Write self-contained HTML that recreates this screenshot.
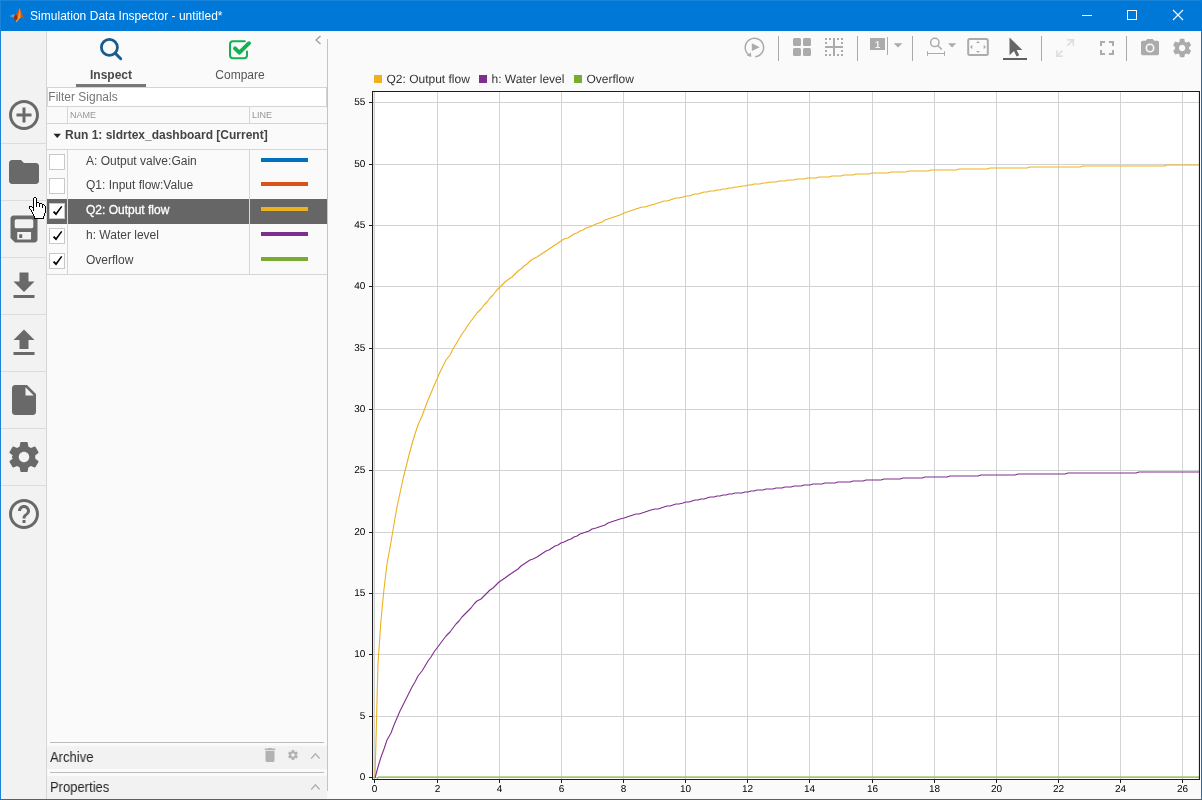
<!DOCTYPE html>
<html lang="en">
<head>
<meta charset="utf-8">
<title>Simulation Data Inspector - untitled*</title>
<style>
*{box-sizing:border-box;margin:0;padding:0}
html,body{width:1202px;height:800px;overflow:hidden}
body{position:relative;background:#fafafa;font-family:"Liberation Sans",Arial,sans-serif;font-size:12px;color:#444}
.abs{position:absolute}
div.abs,svg.abs{will-change:transform}
/* window frame */
#frame-l{left:0;top:0;width:1px;height:800px;background:#1a84da}
#frame-t{left:0;top:0;width:1202px;height:1px;background:#1a84da}
#frame-r{left:1201px;top:0;width:1px;height:800px;background:#0078d7}
#frame-b{left:0;top:799px;width:1202px;height:1px;background:#0078d7}
#titlebar{left:0;top:0;width:1202px;height:31px;background:#0078d7;color:#fff}
#title{left:30px;top:9px;font-size:12px;line-height:15px;white-space:nowrap;letter-spacing:0.03px;color:#fff}
/* sidebar */
#sidebar{left:1px;top:31px;width:46px;height:768px;background:#f2f2f2;border-right:1px solid #d6d6d6}
.sep{left:0;width:45px;height:1px;background:#dcdcdc}
.sico{left:5px;width:36px;height:36px;fill:#696969}
/* panel */
#panel{left:47px;top:31px;width:281px;height:768px;background:#fafafa}
#split{left:327px;top:39px;width:1px;height:752px;background:#c4c4c4}
.tab{font-size:12px;line-height:14px;white-space:nowrap;text-align:center}
#filter{left:47px;top:87px;width:280px;height:20px;background:#fff;border:1px solid #d4d4d4;color:#777;font-size:12px;line-height:18px;padding-left:0.3px}
.hl{background:#d6d6d6}
.hdr{font-size:9px;line-height:10px;color:#969696;white-space:nowrap}
.row{left:86px;font-size:12px;line-height:14px;color:#444;white-space:nowrap}
.cb{left:49px;width:16px;height:16px;background:#fff;border:1px solid #c8c8c8}
.sw{left:261px;width:47px;height:4px}
.bar{left:47px;width:280px;background:#f2f2f2}
.bart{left:50px;font-size:14px;line-height:16px;color:#262626;white-space:nowrap;transform:scaleX(0.929);transform-origin:0 0}
/* toolbar */
.tsep{top:36px;width:1px;height:25px;background:#a9a9a9}
svg{display:block;overflow:visible}
</style>
</head>
<body>
<!-- ================= chart ================= -->
<svg class="abs" id="chart" style="left:0;top:0;text-rendering:geometricPrecision" width="1202" height="800" viewBox="0 0 1202 800">
  <rect x="373" y="92" width="826" height="687" fill="#ffffff"/>
  <g stroke="#d2d3d5" stroke-width="1" shape-rendering="crispEdges">
<line x1="374.5" y1="92" x2="374.5" y2="779"/>
<line x1="437.5" y1="92" x2="437.5" y2="779"/>
<line x1="499.5" y1="92" x2="499.5" y2="779"/>
<line x1="561.5" y1="92" x2="561.5" y2="779"/>
<line x1="623.5" y1="92" x2="623.5" y2="779"/>
<line x1="685.5" y1="92" x2="685.5" y2="779"/>
<line x1="747.5" y1="92" x2="747.5" y2="779"/>
<line x1="809.5" y1="92" x2="809.5" y2="779"/>
<line x1="872.5" y1="92" x2="872.5" y2="779"/>
<line x1="934.5" y1="92" x2="934.5" y2="779"/>
<line x1="996.5" y1="92" x2="996.5" y2="779"/>
<line x1="1058.5" y1="92" x2="1058.5" y2="779"/>
<line x1="1120.5" y1="92" x2="1120.5" y2="779"/>
<line x1="1182.5" y1="92" x2="1182.5" y2="779"/>
<line x1="373" y1="777.5" x2="1199" y2="777.5"/>
<line x1="373" y1="716.5" x2="1199" y2="716.5"/>
<line x1="373" y1="654.5" x2="1199" y2="654.5"/>
<line x1="373" y1="593.5" x2="1199" y2="593.5"/>
<line x1="373" y1="532.5" x2="1199" y2="532.5"/>
<line x1="373" y1="470.5" x2="1199" y2="470.5"/>
<line x1="373" y1="409.5" x2="1199" y2="409.5"/>
<line x1="373" y1="348.5" x2="1199" y2="348.5"/>
<line x1="373" y1="286.5" x2="1199" y2="286.5"/>
<line x1="373" y1="225.5" x2="1199" y2="225.5"/>
<line x1="373" y1="164.5" x2="1199" y2="164.5"/>
<line x1="373" y1="102.5" x2="1199" y2="102.5"/>
  </g>
  <path d="M375,778 L378,663 L381,620 L384,589 L387,564 L391,542 L394,524 L397,507 L400,493 L403,479 L406,467 L409,455 L412,444 L415,434 L418,425 L422,416 L425,408 L428,400 L431,393 L434,386 L437,379 L440,372 L443,366 L446,360 L450,355 L453,349 L456,344 L459,339 L462,334 L465,330 L468,325 L471,321 L474,317 L477,313 L481,309 L484,305 L487,302 L490,298 L493,295 L496,291 L499,288 L502,285 L505,282 L509,279 L512,277 L515,274 L518,271 L521,269 L524,266 L527,264 L530,261 L533,259 L537,257 L540,255 L543,253 L546,251 L549,249 L552,247 L555,245 L558,243 L561,241 L564,239 L568,238 L571,236 L574,234 L577,233 L580,231 L583,230 L586,228 L589,227 L592,226 L596,224 L599,223 L602,222 L605,220 L608,219 L611,218 L614,217 L617,216 L620,215 L624,213 L627,212 L630,211 L633,210 L636,209 L639,208 L642,207 L645,207 L648,206 L651,205 L655,204 L658,203 L661,202 L664,201 L667,201 L670,200 L673,199 L676,198 L679,198 L683,197 L686,196 L689,196 L692,195 L695,194 L698,194 L701,193 L704,192 L707,192 L710,191 L714,191 L717,190 L720,190 L723,189 L726,189 L729,188 L732,188 L735,187 L738,187 L742,186 L745,186 L748,185 L751,185 L754,184 L757,184 L760,184 L763,183 L766,183 L770,182 L773,182 L776,182 L779,181 L782,181 L785,181 L788,180 L791,180 L794,180 L797,179 L801,179 L804,179 L807,178 L810,178 L813,178 L816,178 L819,177 L822,177 L825,177 L829,177 L832,176 L835,176 L838,176 L841,176 L844,175 L847,175 L850,175 L853,175 L856,174 L860,174 L863,174 L866,174 L869,174 L872,173 L875,173 L878,173 L881,173 L884,173 L888,173 L891,172 L894,172 L897,172 L900,172 L903,172 L906,172 L909,171 L912,171 L916,171 L919,171 L922,171 L925,171 L928,171 L931,170 L934,170 L937,170 L940,170 L943,170 L947,170 L950,170 L953,170 L956,170 L959,169 L962,169 L965,169 L968,169 L971,169 L975,169 L978,169 L981,169 L984,169 L987,169 L990,168 L993,168 L996,168 L999,168 L1002,168 L1006,168 L1009,168 L1012,168 L1015,168 L1018,168 L1021,168 L1024,168 L1027,168 L1030,167 L1034,167 L1037,167 L1040,167 L1043,167 L1046,167 L1049,167 L1052,167 L1055,167 L1058,167 L1062,167 L1065,167 L1068,167 L1071,167 L1074,167 L1077,167 L1080,167 L1083,166 L1086,166 L1089,166 L1093,166 L1096,166 L1099,166 L1102,166 L1105,166 L1108,166 L1111,166 L1114,166 L1117,166 L1121,166 L1124,166 L1127,166 L1130,166 L1133,166 L1136,166 L1139,166 L1142,166 L1145,166 L1148,166 L1152,166 L1155,166 L1158,166 L1161,166 L1164,166 L1167,165 L1170,165 L1173,165 L1176,165 L1180,165 L1183,165 L1186,165 L1189,165 L1192,165 L1195,165 L1198,165 L1199,165" fill="none" stroke="#edb120" stroke-width="1.100" stroke-linejoin="round"/>
  <path d="M375,778 L378,767 L381,757 L384,749 L387,740 L391,733 L394,725 L397,718 L400,711 L403,705 L406,699 L409,693 L412,687 L415,682 L418,676 L422,671 L425,666 L428,661 L431,657 L434,652 L437,648 L440,644 L443,640 L446,636 L450,632 L453,628 L456,624 L459,621 L462,617 L465,614 L468,611 L471,608 L474,604 L477,601 L481,599 L484,596 L487,593 L490,590 L493,588 L496,585 L499,582 L502,580 L505,578 L509,575 L512,573 L515,571 L518,569 L521,566 L524,564 L527,562 L530,560 L533,559 L537,557 L540,555 L543,553 L546,551 L549,550 L552,548 L555,546 L558,545 L561,543 L564,542 L568,540 L571,539 L574,537 L577,536 L580,534 L583,533 L586,532 L589,531 L592,529 L596,528 L599,527 L602,526 L605,525 L608,523 L611,522 L614,521 L617,520 L620,519 L624,518 L627,517 L630,516 L633,515 L636,514 L639,514 L642,513 L645,512 L648,511 L651,510 L655,509 L658,509 L661,508 L664,507 L667,506 L670,506 L673,505 L676,504 L679,504 L683,503 L686,502 L689,502 L692,501 L695,500 L698,500 L701,499 L704,499 L707,498 L710,497 L714,497 L717,496 L720,496 L723,495 L726,495 L729,494 L732,494 L735,493 L738,493 L742,493 L745,492 L748,492 L751,491 L754,491 L757,490 L760,490 L763,490 L766,489 L770,489 L773,489 L776,488 L779,488 L782,488 L785,487 L788,487 L791,487 L794,486 L797,486 L801,486 L804,485 L807,485 L810,485 L813,484 L816,484 L819,484 L822,484 L825,483 L829,483 L832,483 L835,483 L838,482 L841,482 L844,482 L847,482 L850,482 L853,481 L856,481 L860,481 L863,481 L866,480 L869,480 L872,480 L875,480 L878,480 L881,480 L884,479 L888,479 L891,479 L894,479 L897,479 L900,479 L903,478 L906,478 L909,478 L912,478 L916,478 L919,478 L922,478 L925,477 L928,477 L931,477 L934,477 L937,477 L940,477 L943,477 L947,477 L950,476 L953,476 L956,476 L959,476 L962,476 L965,476 L968,476 L971,476 L975,476 L978,476 L981,475 L984,475 L987,475 L990,475 L993,475 L996,475 L999,475 L1002,475 L1006,475 L1009,475 L1012,475 L1015,475 L1018,474 L1021,474 L1024,474 L1027,474 L1030,474 L1034,474 L1037,474 L1040,474 L1043,474 L1046,474 L1049,474 L1052,474 L1055,474 L1058,474 L1062,474 L1065,474 L1068,473 L1071,473 L1074,473 L1077,473 L1080,473 L1083,473 L1086,473 L1089,473 L1093,473 L1096,473 L1099,473 L1102,473 L1105,473 L1108,473 L1111,473 L1114,473 L1117,473 L1121,473 L1124,473 L1127,473 L1130,473 L1133,473 L1136,473 L1139,472 L1142,472 L1145,472 L1148,472 L1152,472 L1155,472 L1158,472 L1161,472 L1164,472 L1167,472 L1170,472 L1173,472 L1176,472 L1180,472 L1183,472 L1186,472 L1189,472 L1192,472 L1195,472 L1198,472 L1199,472" fill="none" stroke="#7e2f8e" stroke-width="1.100" stroke-linejoin="round"/>
  <path d="M377,779 L378,777 L1199,777" fill="none" stroke="#77ac30" stroke-width="1"/>
  <g stroke="#1e1e1e" stroke-width="1" shape-rendering="crispEdges">
<line x1="374.5" y1="779" x2="374.5" y2="783"/>
<line x1="437.5" y1="779" x2="437.5" y2="783"/>
<line x1="499.5" y1="779" x2="499.5" y2="783"/>
<line x1="561.5" y1="779" x2="561.5" y2="783"/>
<line x1="623.5" y1="779" x2="623.5" y2="783"/>
<line x1="685.5" y1="779" x2="685.5" y2="783"/>
<line x1="747.5" y1="779" x2="747.5" y2="783"/>
<line x1="809.5" y1="779" x2="809.5" y2="783"/>
<line x1="872.5" y1="779" x2="872.5" y2="783"/>
<line x1="934.5" y1="779" x2="934.5" y2="783"/>
<line x1="996.5" y1="779" x2="996.5" y2="783"/>
<line x1="1058.5" y1="779" x2="1058.5" y2="783"/>
<line x1="1120.5" y1="779" x2="1120.5" y2="783"/>
<line x1="1182.5" y1="779" x2="1182.5" y2="783"/>
<line x1="369" y1="777.5" x2="372" y2="777.5"/>
<line x1="369" y1="716.5" x2="372" y2="716.5"/>
<line x1="369" y1="654.5" x2="372" y2="654.5"/>
<line x1="369" y1="593.5" x2="372" y2="593.5"/>
<line x1="369" y1="532.5" x2="372" y2="532.5"/>
<line x1="369" y1="470.5" x2="372" y2="470.5"/>
<line x1="369" y1="409.5" x2="372" y2="409.5"/>
<line x1="369" y1="348.5" x2="372" y2="348.5"/>
<line x1="369" y1="286.5" x2="372" y2="286.5"/>
<line x1="369" y1="225.5" x2="372" y2="225.5"/>
<line x1="369" y1="164.5" x2="372" y2="164.5"/>
<line x1="369" y1="102.5" x2="372" y2="102.5"/>
  </g>
  <path d="M372.55,779.45 V91.55 H1199.45 V779.45 Z" fill="none" stroke="#1e1e1e" stroke-width="1.1"/>
  <g font-family="Liberation Sans, Arial, sans-serif" font-size="10" fill="#000">
<text x="374.5" y="792" text-anchor="middle">0</text>
<text x="437.5" y="792" text-anchor="middle">2</text>
<text x="499.5" y="792" text-anchor="middle">4</text>
<text x="561.5" y="792" text-anchor="middle">6</text>
<text x="623.5" y="792" text-anchor="middle">8</text>
<text x="685.5" y="792" text-anchor="middle">10</text>
<text x="747.5" y="792" text-anchor="middle">12</text>
<text x="809.5" y="792" text-anchor="middle">14</text>
<text x="872.5" y="792" text-anchor="middle">16</text>
<text x="934.5" y="792" text-anchor="middle">18</text>
<text x="996.5" y="792" text-anchor="middle">20</text>
<text x="1058.5" y="792" text-anchor="middle">22</text>
<text x="1120.5" y="792" text-anchor="middle">24</text>
<text x="1182.5" y="792" text-anchor="middle">26</text>
<text x="365.3" y="780.0" text-anchor="end">0</text>
<text x="365.3" y="719.0" text-anchor="end">5</text>
<text x="365.3" y="657.0" text-anchor="end">10</text>
<text x="365.3" y="596.0" text-anchor="end">15</text>
<text x="365.3" y="535.0" text-anchor="end">20</text>
<text x="365.3" y="473.0" text-anchor="end">25</text>
<text x="365.3" y="412.0" text-anchor="end">30</text>
<text x="365.3" y="351.0" text-anchor="end">35</text>
<text x="365.3" y="289.0" text-anchor="end">40</text>
<text x="365.3" y="228.0" text-anchor="end">45</text>
<text x="365.3" y="167.0" text-anchor="end">50</text>
<text x="365.3" y="105.0" text-anchor="end">55</text>
  </g>
  <!-- legend -->
  <rect x="374" y="75" width="8" height="8" fill="#edb120"/>
  <rect x="479" y="75" width="8" height="8" fill="#7e2f8e"/>
  <rect x="574" y="75" width="8" height="8" fill="#77ac30"/>
  <g font-family="Liberation Sans, Arial, sans-serif" font-size="12" fill="#333">
    <text x="386.5" y="83">Q2: Output flow</text>
    <text x="491.5" y="83">h: Water level</text>
    <text x="586.5" y="83">Overflow</text>
  </g>
</svg>

<!-- ================= title bar ================= -->
<div class="abs" id="titlebar"></div>
<div class="abs" id="title">Simulation Data Inspector - untitled*</div>
<svg class="abs" style="left:8px;top:7px" width="18" height="17" viewBox="0 0 18 17">
  <path d="M1.500,9.000 L6.000,6.900 L7.400,8.200 L5.800,11.000 Z" fill="#5c9fd6"/>
  <path d="M5.800,11.000 C6.400,9.000 7.000,7.400 8.000,7.000 C9.600,5.800 10.600,2.600 11.800,1.000 C12.700,2.400 14.400,8.600 16.700,11.800 C15.300,11.100 14.200,10.300 13.200,10.300 C11.500,11.300 10.000,13.900 8.400,15.200 C7.300,14.100 6.500,12.500 5.800,11.000 Z" fill="#d4501c"/>
  <path d="M11.800,1.000 C12.500,3.600 12.800,7.600 12.600,10.600 C11.500,11.600 9.800,14.100 8.400,15.200 C9.900,11.200 10.700,5.400 11.800,1.000 Z" fill="#f59a23"/>
  <path d="M5.800,11.000 C6.400,9.000 7.000,7.400 8.000,7.000 C8.800,8.000 9.400,9.600 9.400,11.000 C8.800,12.200 8.200,13.400 7.800,14.400 C7.000,13.400 6.400,12.200 5.800,11.000 Z" fill="#9e2a16"/>
  <path d="M8.400,15.200 C8.000,14.600 7.800,14.200 7.800,14.400 C8.400,13.600 9.000,12.800 9.600,12.400 C9.400,13.400 9.000,14.400 8.400,15.200 Z" fill="#f7b32b"/>
</svg>
<svg class="abs" style="left:1062px;top:0" width="140" height="31" viewBox="0 0 140 31" fill="none" stroke="#fff" stroke-width="1" shape-rendering="crispEdges">
  <line x1="20" y1="15.5" x2="30" y2="15.5"/>
  <rect x="65.500" y="10.500" width="9" height="9"/>
  <path d="M111,10 L121,20 M121,10 L111,20" shape-rendering="auto" stroke-width="1.1"/>
</svg>

<!-- ================= sidebar ================= -->
<div class="abs" id="sidebar">
  <div class="abs sep" style="top:112px"></div>
  <div class="abs sep" style="top:169px"></div>
  <div class="abs sep" style="top:226px"></div>
  <div class="abs sep" style="top:283px"></div>
  <div class="abs sep" style="top:340px"></div>
  <div class="abs sep" style="top:397px"></div>
  <div class="abs sep" style="top:454px"></div>
  <svg class="abs sico" style="top:66px" viewBox="0 0 24 24"><path d="M13 7h-2v4H7v2h4v4h2v-4h4v-2h-4V7zm-1-5C6.480 2 2 6.480 2 12s4.480 10 10 10 10-4.480 10-10S17.520 2 12 2zm0 18c-4.410 0-8-3.590-8-8s3.590-8 8-8 8 3.590 8 8-3.590 8-8 8z"/></svg>
  <svg class="abs sico" style="top:123px" viewBox="0 0 24 24"><path d="M10 4H4c-1.100 0-1.990.9-1.990 2L2 18c0 1.100.9 2 2 2h16c1.100 0 2-.9 2-2V8c0-1.100-.9-2-2-2h-8l-2-2z"/></svg>
  <svg class="abs sico" style="top:180px" viewBox="0 0 24 24"><path fill-rule="evenodd" d="M5 3h14c1.100 0 2 .9 2 2v14c0 1.100-.9 2-2 2H6l-3-3V5c0-1.100.9-2 2-2zM7 5.500c-.7 0-1.200.5-1.200 1.200v3.600c0 .7.500 1.200 1.200 1.200h10c.7 0 1.200-.5 1.200-1.200V6.700c0-.7-.5-1.200-1.200-1.200H7zM7.500 14v5h9.200v-5H7.500zM8.800 15.500h2v2.500h-2v-2.500z"/></svg>
  <svg class="abs sico" style="top:237px" viewBox="0 0 24 24"><path d="M19 9h-4V3H9v6H5l7 7 7-7zM5 18v2h14v-2H5z"/></svg>
  <svg class="abs sico" style="top:294px" viewBox="0 0 24 24"><path d="M9 16h6v-6h4l-7-7-7 7h4zm-4 2h14v2H5z"/></svg>
  <svg class="abs sico" style="top:351px" viewBox="0 0 24 24"><path d="M6 2c-1.100 0-1.990.9-1.990 2L4 20c0 1.100.89 2 1.990 2H18c1.100 0 2-.9 2-2V8l-6-6H6zm7 7V3.500L18.500 9H13z"/></svg>
  <svg class="abs sico" style="top:408px" viewBox="0 0 24 24"><path d="M19.430 12.980c.04-.32.070-.64.070-.98s-.03-.66-.07-.98l2.110-1.650c.19-.15.240-.42.120-.64l-2-3.460c-.12-.22-.39-.3-.61-.22l-2.490 1c-.52-.4-1.080-.73-1.690-.98l-.38-2.650C14.460 2.180 14.250 2 14 2h-4c-.25 0-.46.180-.49.420l-.38 2.650c-.61.250-1.170.59-1.690.98l-2.490-1c-.23-.09-.49 0-.61.220l-2 3.460c-.13.220-.07.490.12.640l2.110 1.650c-.4.320-.7.650-.7.980s.3.660.7.980l-2.110 1.650c-.19.150-.24.420-.12.640l2 3.460c.12.220.39.300.61.220l2.490-1c.52.400 1.080.73 1.690.98l.38 2.650c.3.240.24.420.49.420h4c.25 0 .46-.18.490-.42l.38-2.650c.61-.25 1.170-.59 1.690-.98l2.490 1c.23.090.49 0 .61-.22l2-3.460c.12-.22.070-.49-.12-.64l-2.110-1.650zM12 15.500c-1.930 0-3.500-1.570-3.500-3.500s1.570-3.500 3.500-3.500 3.500 1.570 3.500 3.500-1.570 3.500-3.500 3.500z"/></svg>
  <svg class="abs sico" style="top:465px" viewBox="0 0 24 24"><path d="M11 18h2v-2h-2v2zm1-16C6.480 2 2 6.480 2 12s4.480 10 10 10 10-4.480 10-10S17.520 2 12 2zm0 18c-4.410 0-8-3.590-8-8s3.590-8 8-8 8 3.590 8 8-3.590 8-8 8zm0-14c-2.210 0-4 1.790-4 4h2c0-1.100.9-2 2-2s2 .9 2 2c0 2-3 1.750-3 5h2c0-2.250 3-2.500 3-5 0-2.210-1.790-4-4-4z"/></svg>
</div>

<!-- ================= signal panel ================= -->
<!-- tabs -->
<svg class="abs" style="left:97px;top:35px" width="28" height="28" viewBox="0 0 28 28" fill="none" stroke="#1a5a8c" stroke-linecap="round">
  <circle cx="12.400" cy="12.400" r="8" stroke-width="2.800"/>
  <line x1="18.400" y1="18.400" x2="23.700" y2="23.700" stroke-width="2.900"/>
</svg>
<div class="abs tab" style="left:76px;top:68px;width:70px;font-weight:bold;color:#4a4a4a">Inspect</div>
<div class="abs" style="left:76px;top:84px;width:70px;height:3px;background:#787878"></div>
<svg class="abs" style="left:228px;top:38px" width="26" height="24" viewBox="0 0 26 24" fill="none">
  <path d="M16.800,3.300 H5 a3,3 0 0 0 -3,3 V17.200 a3,3 0 0 0 3,3 H16 a3,3 0 0 0 3,-3 V13.600" stroke="#12b24e" stroke-width="2" stroke-linecap="round"/>
  <path d="M7.000,10.300 L11.400,14.700 L21.000,5.200" stroke="#12b24e" stroke-width="3.900" stroke-linejoin="round" stroke-linecap="round"/>
</svg>
<div class="abs tab" style="left:205px;top:68px;width:70px;color:#555">Compare</div>
<svg class="abs" style="left:314px;top:35px" width="8" height="10" viewBox="0 0 8 10" fill="none" stroke="#999" stroke-width="1.200"><path d="M6.500,1 L2,5 L6.500,9"/></svg>
<!-- filter -->
<div class="abs" id="filter">Filter Signals</div>
<!-- table header -->
<div class="abs hl" style="left:47px;top:123px;width:280px;height:1px"></div>
<div class="abs hl" style="left:47px;top:149px;width:280px;height:1px"></div>
<div class="abs hl" style="left:47px;top:274px;width:280px;height:1px"></div>
<div class="abs hl" style="left:67px;top:107px;width:1px;height:16px"></div>
<div class="abs hl" style="left:249px;top:107px;width:1px;height:16px"></div>
<div class="abs hl" style="left:67px;top:150px;width:1px;height:124px"></div>
<div class="abs hl" style="left:249px;top:150px;width:1px;height:124px"></div>
<div class="abs hdr" style="left:70px;top:110px">NAME</div>
<div class="abs hdr" style="left:252px;top:110px">LINE</div>
<!-- run row -->
<svg class="abs" style="left:53px;top:133px" width="9" height="6" viewBox="0 0 9 6"><path d="M0.500,0.800 H8 L4.250,5 Z" fill="#222"/></svg>
<div class="abs row" style="left:65px;top:128px;font-weight:bold;color:#444">Run 1: sldrtex_dashboard [Current]</div>
<!-- selected row bg -->
<div class="abs" style="left:47px;top:199px;width:280px;height:25px;background:#666"></div>
<div class="abs" style="left:67px;top:199px;width:1px;height:25px;background:#d8d8d8"></div>
<div class="abs" style="left:249px;top:199px;width:1px;height:25px;background:#d8d8d8"></div>
<!-- rows -->
<div class="abs cb" style="top:154px"></div>
<div class="abs row" style="top:154px">A: Output valve:Gain</div>
<div class="abs sw" style="top:158px;background:#0072bd"></div>

<div class="abs cb" style="top:178px"></div>
<div class="abs row" style="top:178px">Q1: Input flow:Value</div>
<div class="abs sw" style="top:182px;background:#d95319"></div>

<div class="abs cb" style="top:203px"></div>
<svg class="abs" style="left:49px;top:203px" width="16" height="16" viewBox="0 0 16 16"><path d="M3.900,9.300 L5.200,8.000 L7.000,9.800 L12.100,2.900 L13.300,3.700 L7.100,12.400 Z" fill="#000"/></svg>
<div class="abs row" style="top:203px;color:#fff;-webkit-text-stroke:0.3px #fff">Q2: Output flow</div>
<div class="abs sw" style="top:207px;background:#edb120"></div>

<div class="abs cb" style="top:228px"></div>
<svg class="abs" style="left:49px;top:228px" width="16" height="16" viewBox="0 0 16 16"><path d="M3.900,9.300 L5.200,8.000 L7.000,9.800 L12.100,2.900 L13.300,3.700 L7.100,12.400 Z" fill="#000"/></svg>
<div class="abs row" style="top:228px">h: Water level</div>
<div class="abs sw" style="top:232px;background:#7e2f8e"></div>

<div class="abs cb" style="top:253px"></div>
<svg class="abs" style="left:49px;top:253px" width="16" height="16" viewBox="0 0 16 16"><path d="M3.900,9.300 L5.200,8.000 L7.000,9.800 L12.100,2.900 L13.300,3.700 L7.100,12.400 Z" fill="#000"/></svg>
<div class="abs row" style="top:253px">Overflow</div>
<div class="abs sw" style="top:257px;background:#77ac30"></div>

<!-- archive / properties -->
<div class="abs" style="left:50px;top:742px;width:274px;height:1px;background:#bdbdbd"></div>
<div class="abs bar" style="top:746px;height:23px"></div>
<div class="abs bart" style="top:749px">Archive</div>
<div class="abs" style="left:50px;top:772px;width:274px;height:1px;background:#bdbdbd"></div>
<div class="abs bar" style="top:776px;height:23px"></div>
<div class="abs bart" style="top:779px">Properties</div>
<svg class="abs" style="left:262px;top:746px" width="16" height="18" viewBox="0 0 16 18" fill="#b2b2b2"><path d="M3.500,4.800 H12.500 V14.600 a1.300,1.300 0 0 1 -1.300,1.300 H4.800 a1.300,1.300 0 0 1 -1.300,-1.300 Z M2.800,2.600 H6 L6.600,2 H9.400 L10,2.600 H13.200 V4 H2.800 Z"/></svg>
<svg class="abs" style="left:287px;top:749px" width="12" height="12" viewBox="0 0 24 24" fill="#b2b2b2"><path d="M19.430 12.980c.04-.32.070-.64.070-.98s-.03-.66-.07-.98l2.110-1.650c.19-.15.240-.42.120-.64l-2-3.460c-.12-.22-.39-.3-.61-.22l-2.490 1c-.52-.4-1.080-.73-1.690-.98l-.38-2.650C14.460 2.180 14.250 2 14 2h-4c-.25 0-.46.180-.49.420l-.38 2.650c-.61.250-1.170.59-1.690.98l-2.490-1c-.23-.09-.49 0-.61.220l-2 3.460c-.13.220-.07.490.12.640l2.110 1.650c-.4.320-.7.650-.7.980s.3.660.7.980l-2.110 1.650c-.19.150-.24.420-.12.640l2 3.460c.12.220.39.300.61.220l2.490-1c.52.400 1.080.73 1.690.98l.38 2.650c.3.240.24.420.49.420h4c.25 0 .46-.18.490-.42l.38-2.650c.61-.25 1.170-.59 1.690-.98l2.490 1c.23.090.49 0 .61-.22l2-3.460c.12-.22.070-.49-.12-.64l-2.110-1.650zM12 15.500c-1.930 0-3.500-1.570-3.500-3.500s1.570-3.500 3.500-3.500 3.500 1.570 3.500 3.500-1.570 3.500-3.500 3.500z"/></svg>
<svg class="abs" style="left:310px;top:752px" width="11" height="8" viewBox="0 0 11 8" fill="none" stroke="#b2b2b2" stroke-width="1.400"><path d="M1.200,6.500 L5.400,1.800 L9.600,6.500"/></svg>
<svg class="abs" style="left:310px;top:783px" width="11" height="8" viewBox="0 0 11 8" fill="none" stroke="#b2b2b2" stroke-width="1.400"><path d="M1.200,6.500 L5.400,1.800 L9.600,6.500"/></svg>

<div class="abs" id="split"></div>

<!-- ================= toolbar ================= -->
<div class="abs tsep" style="left:778px"></div>
<div class="abs tsep" style="left:857px"></div>
<div class="abs tsep" style="left:912px"></div>
<div class="abs tsep" style="left:1041px"></div>
<div class="abs tsep" style="left:1126px"></div>
<svg class="abs" id="toolbar" style="left:735px;top:31px;text-rendering:geometricPrecision" width="466" height="40" viewBox="735 31 466 40">
  <!-- replay -->
  <path d="M755.2,56.700 A9.200,9.200 0 1 0 748.300,54.400" fill="none" stroke="#ababab" stroke-width="1.500"/>
  <path d="M746.600,55.500 L750.900,52.400 L751.300,57.100 Z" fill="#ababab"/>
  <path d="M751.800,43.300 L759.700,47.300 L751.800,51.100 Z" fill="#ababab"/>
  <!-- grid 2x2 -->
  <g fill="#ababab">
    <rect x="793" y="38" width="8" height="8" rx="1.500"/>
    <rect x="803" y="38" width="8" height="8" rx="1.500"/>
    <rect x="793" y="48" width="8" height="8" rx="1.500"/>
    <rect x="803" y="48" width="8" height="8" rx="1.500"/>
  </g>
  <!-- dashed grid -->
  <g fill="#ababab" shape-rendering="crispEdges">
    <rect x="833" y="38" width="2" height="18"/>
    <rect x="825" y="46" width="18" height="2"/>
    <rect x="825" y="38" width="2" height="2"/><rect x="829" y="38" width="2" height="2"/><rect x="837" y="38" width="2" height="2"/><rect x="841" y="38" width="2" height="2"/>
    <rect x="825" y="54" width="2" height="2"/><rect x="829" y="54" width="2" height="2"/><rect x="837" y="54" width="2" height="2"/><rect x="841" y="54" width="2" height="2"/>
    <rect x="825" y="42" width="2" height="2"/><rect x="841" y="42" width="2" height="2"/>
    <rect x="825" y="50" width="2" height="2"/><rect x="841" y="50" width="2" height="2"/>
  </g>
  <!-- layout 1 -->
  <rect x="870" y="38" width="15" height="12" fill="#ababab"/>
  <text x="877.600" y="47.600" font-family="Liberation Sans, Arial, sans-serif" font-size="10" font-weight="bold" fill="#f4f4f4" text-anchor="middle">1</text>
  <rect x="887" y="37" width="1" height="18" fill="#ababab"/>
  <path d="M893.700,43.200 H902.300 L898,47.400 Z" fill="#ababab"/>
  <!-- zoom -->
  <g fill="none" stroke="#ababab" stroke-width="1.500">
    <circle cx="934.800" cy="42.400" r="4.200"/>
    <path d="M937.800,45.400 L941.800,49.600"/>
    <path d="M927.500,53.500 H944.500 M927.500,51.200 V55.800 M944.500,51.200 V55.800" stroke-width="1"/>
  </g>
  <path d="M948,43.200 H956.200 L952.100,47.400 Z" fill="#ababab"/>
  <!-- fit to view -->
  <rect x="968.200" y="39" width="19.600" height="16" rx="1.500" fill="none" stroke="#ababab" stroke-width="2"/>
  <g fill="#ababab">
    <path d="M976,43 L978,41 L980,43 Z"/>
    <path d="M976,51 L978,53 L980,51 Z"/>
    <path d="M972.300,44.800 L970.100,47 L972.300,49.200 Z"/>
    <path d="M983.700,44.800 L985.900,47 L983.700,49.200 Z"/>
  </g>
  <!-- cursor -->
  <path d="M1009.500,37.400 V55.200 L1014,51 L1016.600,56.400 L1019.200,55.200 L1016.600,50 H1022.300 Z" fill="#666"/>
  <rect x="1003" y="58" width="24" height="2" fill="#606060"/>
  <!-- expand arrows (disabled) -->
  <g fill="none" stroke="#dfdfdf" stroke-width="1.700">
    <path d="M1067.200,39.800 H1073.300 V45.800 M1073,40.100 L1067.400,45.700"/>
    <path d="M1062.800,56.100 H1056.800 V50.200 M1057.100,55.800 L1062.500,50.400"/>
  </g>
  <!-- fullscreen -->
  <path transform="translate(1095,36)" d="M7 14H5v5h5v-2H7v-3zm-2-4h2V7h3V5H5v5zm12 7h-3v2h5v-5h-2v3zM14 5v2h3v3h2V5h-5z" fill="#ababab"/>
  <!-- camera -->
  <g transform="translate(1139.200,37.200) scale(0.9)" fill="#ababab">
    <circle cx="12" cy="12" r="3.200"/>
    <path d="M9 2L7.170 4H4c-1.100 0-2 .9-2 2v12c0 1.100.9 2 2 2h16c1.100 0 2-.9 2-2V6c0-1.100-.9-2-2-2h-3.170L15 2H9zm3 15c-2.760 0-5-2.240-5-5s2.240-5 5-5 5 2.240 5 5-2.240 5-5 5z"/>
  </g>
  <!-- settings -->
  <g transform="translate(1171.100,37) scale(0.92)" fill="#ababab">
    <path d="M19.430 12.980c.04-.32.070-.64.070-.98s-.03-.66-.07-.98l2.110-1.650c.19-.15.240-.42.120-.64l-2-3.460c-.12-.22-.39-.3-.61-.22l-2.490 1c-.52-.4-1.080-.73-1.690-.98l-.38-2.650C14.460 2.180 14.250 2 14 2h-4c-.25 0-.46.180-.49.420l-.38 2.650c-.61.250-1.170.59-1.690.98l-2.490-1c-.23-.09-.49 0-.61.220l-2 3.460c-.13.220-.07.490.12.640l2.110 1.650c-.4.320-.7.650-.7.980s.3.660.7.980l-2.110 1.650c-.19.150-.24.420-.12.640l2 3.460c.12.220.39.300.61.220l2.490-1c.52.400 1.080.73 1.690.98l.38 2.650c.3.240.24.420.49.420h4c.25 0 .46-.18.490-.42l.38-2.650c.61-.25 1.170-.59 1.690-.98l2.490 1c.23.090.49 0 .61-.22l2-3.460c.12-.22.070-.49-.12-.64l-2.110-1.650zM12 15.500c-1.930 0-3.500-1.570-3.500-3.500s1.570-3.500 3.500-3.500 3.500 1.570 3.500 3.500-1.570 3.500-3.500 3.500z"/>
  </g>
</svg>

<!-- hand cursor -->
<svg class="abs" style="left:29px;top:197px" width="17" height="22" viewBox="0 0 17 22" shape-rendering="crispEdges"><path d="M5 1h2v1h-2zM5 2h2v1h-2zM5 3h2v1h-2zM5 4h2v1h-2zM5 5h2v1h-2zM5 6h2v1h-2zM8 6h2v1h-2zM5 7h2v1h-2zM8 7h2v1h-2zM11 7h2v1h-2zM5 8h2v1h-2zM8 8h2v1h-2zM11 8h2v1h-2zM14 8h1v1h-1zM5 9h2v1h-2zM8 9h2v1h-2zM11 9h2v1h-2zM14 9h2v1h-2zM1 10h2v1h-2zM5 10h8v1h-8zM14 10h2v1h-2zM1 11h3v1h-3zM5 11h11v1h-11zM2 12h2v1h-2zM5 12h11v1h-11zM3 13h1v1h-1zM5 13h11v1h-11zM3 14h13v1h-13zM4 15h12v1h-12zM4 16h11v1h-11zM5 17h10v1h-10zM5 18h10v1h-10zM6 19h8v1h-8zM6 20h8v1h-8z" fill="#fff"/><path d="M5 0h2v1h-2zM4 1h1v1h-1zM7 1h1v1h-1zM4 2h1v1h-1zM7 2h1v1h-1zM4 3h1v1h-1zM7 3h1v1h-1zM4 4h1v1h-1zM7 4h1v1h-1zM4 5h1v1h-1zM7 5h3v1h-3zM4 6h1v1h-1zM7 6h1v1h-1zM10 6h3v1h-3zM4 7h1v1h-1zM7 7h1v1h-1zM10 7h1v1h-1zM13 7h2v1h-2zM4 8h1v1h-1zM7 8h1v1h-1zM10 8h1v1h-1zM13 8h1v1h-1zM15 8h1v1h-1zM0 9h3v1h-3zM4 9h1v1h-1zM7 9h1v1h-1zM10 9h1v1h-1zM13 9h1v1h-1zM16 9h1v1h-1zM0 10h1v1h-1zM3 10h2v1h-2zM13 10h1v1h-1zM16 10h1v1h-1zM0 11h1v1h-1zM4 11h1v1h-1zM16 11h1v1h-1zM1 12h1v1h-1zM4 12h1v1h-1zM16 12h1v1h-1zM2 13h1v1h-1zM4 13h1v1h-1zM16 13h1v1h-1zM2 14h1v1h-1zM16 14h1v1h-1zM3 15h1v1h-1zM16 15h1v1h-1zM3 16h1v1h-1zM15 16h1v1h-1zM4 17h1v1h-1zM15 17h1v1h-1zM4 18h1v1h-1zM15 18h1v1h-1zM5 19h1v1h-1zM14 19h1v1h-1zM5 20h1v1h-1zM14 20h1v1h-1zM5 21h10v1h-10z" fill="#000"/></svg>

<div class="abs" id="frame-l"></div>
<div class="abs" id="frame-t"></div>
<div class="abs" id="frame-r"></div>
<div class="abs" id="frame-b"></div>
</body>
</html>
